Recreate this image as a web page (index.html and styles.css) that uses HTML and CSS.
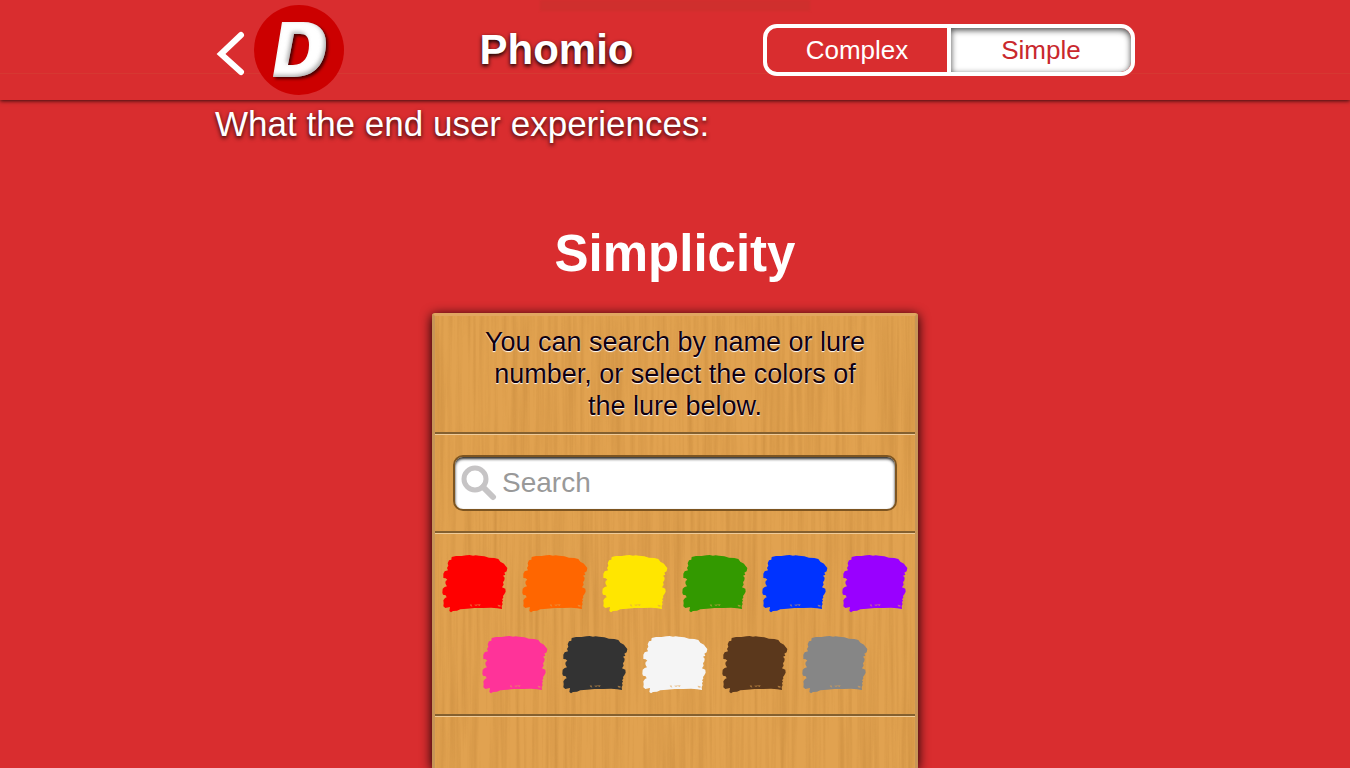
FILE: index.html
```html
<!DOCTYPE html>
<html lang="en">
<head>
<meta charset="utf-8">
<title>Phomio</title>
<link rel="stylesheet" href="styles.css">
</head>
<body>
<svg class="defs" aria-hidden="true">
  <defs>
    <filter id="bevel" x="-20%" y="-20%" width="150%" height="150%" color-interpolation-filters="sRGB">
      <feOffset in="SourceAlpha" dx="-2" dy="-2" result="shifted"/>
      <feGaussianBlur in="shifted" stdDeviation="2" result="soft"/>
      <feComposite in="SourceAlpha" in2="soft" operator="out" result="edge"/>
      <feFlood flood-color="#888" flood-opacity="0.65"/>
      <feComposite in2="edge" operator="in" result="shade"/>
      <feMerge result="face"><feMergeNode in="SourceGraphic"/><feMergeNode in="shade"/></feMerge>
      <feDropShadow in="face" dx="2" dy="2" stdDeviation="1.5" flood-color="#300" flood-opacity="0.85"/>
    </filter>
    <filter id="grain" x="0" y="0" width="100%" height="100%" color-interpolation-filters="sRGB">
      <feTurbulence type="fractalNoise" baseFrequency="0.22 0.006" numOctaves="3" seed="8"/>
      <feColorMatrix values="0 0 0 0 0.76  0 0 0 0 0.52  0 0 0 0 0.22  1.5 0 0 0 -0.55"/>
    </filter>
    <symbol id="paint" viewBox="0 9 240 243">
      <path d="M50 51 L63 48 80 48 94 46 104 45 114 47 122 46 132 47 148 49 162 53 178 54 190 57 196 65 207 71 210 76 217 84 215 94 208 98 211 104 204 107 209 113 208 121 204 127 206 134 201 142 211 146 212 155 208 163 204 168 205 173 201 178 204 181 201 187 203 192 200 198 201 207 187 205 168 203 145 204 119 204 96 206 76 208 66 212 54 213 48 217 43 213 45 201 31 204 25 199 26 190 25 181 30 174 35 172 32 166 24 164 22 158 23 146 29 141 36 139 33 134 31 129 32 123 37 119 32 115 25 114 25 101 29 94 39 91 36 84 40 77 38 70 42 61 49 59Z"/>
      <path class="fleck" d="M104 194l5-1 3 7-5-2zM117 194l20-1-3 5-6-3-5 3zM188 194l9 2-1 5-7-2z"/>
    </symbol>
  </defs>
</svg>

<header class="topbar">
  <div class="wrap topbar-row">
    <a class="back" href="#" aria-label="Back">
      <svg width="32" height="48" viewBox="0 0 32 48"><path d="M26 6 6 25 26 43" fill="none" stroke="#fff" stroke-width="6" stroke-linecap="round"/></svg>
    </a>
    <a class="logo" href="#" aria-label="Home">
      <svg width="90" height="90" viewBox="0 0 90 90">
        <circle cx="45" cy="45" r="45" fill="#c00"/>
        <path filter="url(#bevel)" fill="#fff" fill-rule="evenodd" d="M28 17H49C64 17 72 25 72 38C72 58 61 72 40 72H19ZM40 29 34 60H39C50 60 55 51 55 40C55 32 52 29 46 29Z"/>
      </svg>
    </a>
    <h1 class="title">Phomio</h1>
    <div class="toggle">
      <button type="button" class="toggle-btn">Complex</button>
      <button type="button" class="toggle-btn active">Simple</button>
    </div>
  </div>
</header>

<main class="wrap">
  <p class="lead">What the end user experiences:</p>
  <h2 class="heading">Simplicity</h2>
  <section class="panel">
    <svg class="wood" aria-hidden="true"><rect width="100%" height="100%" filter="url(#grain)"/></svg>
    <p class="intro">You can search by name or lure number, or select the colors of the lure below.</p>
    <div class="search-row">
      <label class="search">
        <svg width="36" height="36" viewBox="0 0 36 36" fill="none" stroke="#c6c4c5" aria-hidden="true"><circle cx="14" cy="14" r="11" stroke-width="5"/><path d="M22 22 32 32" stroke-width="6" stroke-linecap="round"/></svg>
        <input type="search" placeholder="Search" aria-label="Search">
      </label>
    </div>
    <div class="swatches">
      <button type="button" class="swatch red" aria-label="Red"><svg><use href="#paint"/></svg></button>
      <button type="button" class="swatch orange" aria-label="Orange"><svg><use href="#paint"/></svg></button>
      <button type="button" class="swatch yellow" aria-label="Yellow"><svg><use href="#paint"/></svg></button>
      <button type="button" class="swatch green" aria-label="Green"><svg><use href="#paint"/></svg></button>
      <button type="button" class="swatch blue" aria-label="Blue"><svg><use href="#paint"/></svg></button>
      <button type="button" class="swatch purple" aria-label="Purple"><svg><use href="#paint"/></svg></button>
      <button type="button" class="swatch pink" aria-label="Pink"><svg><use href="#paint"/></svg></button>
      <button type="button" class="swatch black" aria-label="Black"><svg><use href="#paint"/></svg></button>
      <button type="button" class="swatch white" aria-label="White"><svg><use href="#paint"/></svg></button>
      <button type="button" class="swatch brown" aria-label="Brown"><svg><use href="#paint"/></svg></button>
      <button type="button" class="swatch gray" aria-label="Gray"><svg><use href="#paint"/></svg></button>
    </div>
  </section>
</main>
</body>
</html>
```
FILE: styles.css
```css
* { box-sizing: border-box; }

body {
  margin: 0;
  min-height: 100vh;
  display: flex;
  flex-direction: column;
  background: #d92d2f;
  color: #fff;
  font-family: "Liberation Sans", Arial, sans-serif;
}

h1, h2, p { margin: 0; }

button, input { font: inherit; border: 0; }

.defs {
  position: absolute;
  width: 0;
  height: 0;
}

.wrap {
  width: 100%;
  max-width: 920px;
  margin: 0 auto;
}

.topbar {
  position: relative;
  background: linear-gradient(#d92d2f 73px, #d63832 73px, #d63832 74px, #d92d2f 74px);
  box-shadow: 0 1px 4px rgba(0, 0, 0, 0.75);
}

/* soft tint at the top edge of the bar */
.topbar::before {
  content: "";
  position: absolute;
  top: 0;
  left: 40%;
  width: 20%;
  height: 11px;
  background: #cf2f2d;
  filter: blur(1px);
}

.topbar-row {
  display: grid;
  grid-template-columns: 39px 90px 1fr 372px;
  align-items: center;
  height: 100px;
}

.back, .logo { display: flex; }

.back { padding-top: 6px; }

.title {
  padding-left: 6px;
  text-align: center;
  font-size: 42px;
  line-height: 48px;
  text-shadow: 0 2px 4px #000;
}

.toggle {
  display: grid;
  grid-template-columns: 180fr 184fr;
  height: 52px;
  border: 4px solid #fff;
  border-radius: 14px;
  overflow: hidden;
}

.toggle-btn {
  padding: 0;
  background: none;
  color: #fff;
  font-size: 26px;
}

.toggle-btn.active {
  border-left: 4px solid #fff;
  border-radius: 0 10px 10px 0;
  background: #fff;
  color: #c9282d;
  box-shadow: inset 0 2px 6px rgba(0, 0, 0, 0.75);
}

main {
  flex: 1;
  display: flex;
  flex-direction: column;
}

.lead {
  padding-top: 4px;
  font-size: 35px;
  line-height: 40px;
  text-shadow: 0 2px 4px rgba(0, 0, 0, 0.8);
}

.heading {
  margin: 81px 0 30px;
  text-align: center;
  font-size: 51px;
  line-height: 58px;
}

.panel {
  position: relative;
  flex: 1;
  width: 486px;
  max-width: 100%;
  margin: 0 auto;
  border: solid #e1a660;
  border-width: 3px 3px 0;
  border-left-color: #c79557;
  border-right-color: #c79557;
  border-radius: 3px 3px 0 0;
  background: #e1a250;
  box-shadow: 0 2px 12px #000;
}

.wood {
  position: absolute;
  inset: 0;
  width: 100%;
  height: 100%;
  opacity: 0.6;
}

.intro, .search-row, .swatches {
  position: relative;
  border-bottom: 2px solid #84602f;
  box-shadow: 0 1px #f0cb98;
}

.intro {
  padding: 10px 40px;
  color: #100010;
  font-size: 27px;
  line-height: 32px;
  text-align: center;
  text-shadow: 0 1px 1px #fff;
}

.search-row { padding: 21px 18px 20px; }

.search {
  display: flex;
  align-items: center;
  gap: 5px;
  height: 56px;
  padding: 0 6px;
  border: 2px solid #7d5521;
  border-radius: 10px;
  background: #fff;
  box-shadow: inset 0 2px 3px rgba(0, 0, 0, 0.85);
}

.search input {
  flex: 1;
  min-width: 0;
  padding: 0;
  background: none;
  color: #333;
  font-size: 28px;
  outline: 0;
}

.search input::placeholder { color: #999; }

.swatches {
  display: flex;
  flex-wrap: wrap;
  justify-content: center;
  padding: 10px 0 9px;
}

.swatch {
  width: 80px;
  height: 81px;
  padding: 0;
  background: none;
}

.swatch svg {
  display: block;
  width: 100%;
  height: 100%;
  fill: currentColor;
}

.fleck {
  fill: #e1a250;
  opacity: 0.6;
}

.red { color: #f00; }
.orange { color: #f60; }
.yellow { color: #ffe600; }
.green { color: #390; }
.blue { color: #03f; }
.purple { color: #90f; }
.pink { color: #ff3399; }
.black { color: #333; }
.white { color: #f5f5f5; }
.brown { color: #5b381c; }
.gray { color: #868686; }
```
